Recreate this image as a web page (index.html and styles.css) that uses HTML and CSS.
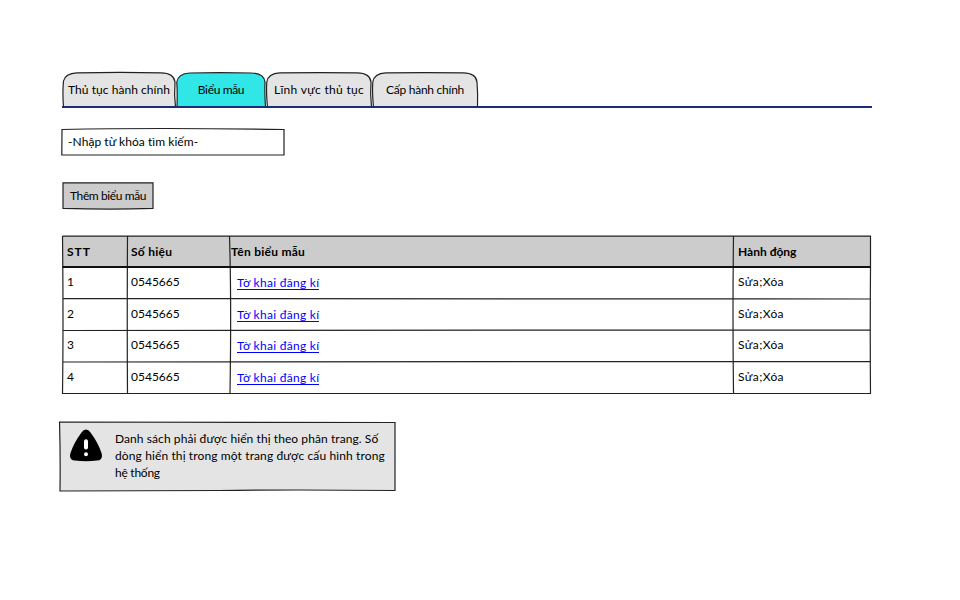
FILE: index.html
```html
<!DOCTYPE html>
<html lang="vi">
<head>
<meta charset="utf-8">
<title>Biểu mẫu</title>
<link rel="stylesheet" href="styles.css">
</head>
<body>
<main class="page">
  <nav class="tabs">
    <a class="tab tab-first"><svg class="frame" viewBox="0 0 114 36"><path d="M1.5 35C.5 22 1 14 1.5 9Q3 1.500 15 .8Q60 0 99 .8Q112 1 113 10Q112 23 113.500 35Z"/></svg><span class="t1">Thủ tục hành chính</span></a>
    <a class="tab tab-forms active"><svg class="frame" viewBox="0 0 91 36"><path d="M1 35Q1.500 20 .8 10Q2 1.500 14 .8Q43 0 76 .8Q89 1 90 10Q89.500 22 90.500 35Z"/></svg><span class="t2">Biểu mẫu</span></a>
    <a class="tab tab-fields"><svg class="frame" viewBox="0 0 107 36"><path d="M1.500 35Q0 20 .8 10Q2 1.500 14 .8Q55 0 92 .8Q105 1 106 10Q105 22 106.500 35Z"/></svg><span class="t3">Lĩnh vực thủ tục</span></a>
    <a class="tab tab-levels"><svg class="frame" viewBox="0 0 107 36"><path d="M1.500 35Q0 20 .8 10Q2 1.500 14 .8Q55 0 92 .8Q105 1 106 10Q107 22 106.500 35Z"/></svg><span class="t4">Cấp hành chính</span></a>
  </nav>
  <div class="search"><svg class="frame" viewBox="0 0 224 28"><path d="M1 1.500Q95 -.5 223 1.500L223 27L.8 27Z"/></svg><span class="t5">-Nhập từ khóa tìm kiếm-</span></div>
  <div class="button"><svg class="frame" viewBox="0 0 92 28"><path d="M1 .8H91V26.300Q50 27.800 1 26.300Z"/></svg><span class="t6">Thêm biểu mẫu</span></div>
  <section class="grid">
    <svg class="frame" viewBox="0 0 810 160"><path class="shade" d="M.5 1H808.500V32.500H.5Z"/><path class="lines" d="M.5 1L808.500 1.200L808.500 32Q808 100 808.500 158.500H.5Q1.500 90 .5 1M.5 63.500L808.500 64M.5 95.500L808.500 95M.5 127L808.500 126.500M65.500 1Q65 90 65.500 158.500M167.500 1Q169.500 65 168 158.500M671.500 1Q670.500 80 671.500 158.500"/><path class="heavy" d="M.5 32H808.500"/></svg>
    <div class="row head"><span class="b1">STT</span><span class="b2">Số hiệu</span><span class="name b3">Tên biểu mẫu</span><span class="b4">Hành động</span></div>
    <div class="row"><span>1</span><span class="code">0545665</span><a class="link">Tờ khai đăng kí</a><span class="act">Sửa;Xóa</span></div>
    <div class="row"><span>2</span><span class="code">0545665</span><a class="link">Tờ khai đăng kí</a><span class="act">Sửa;Xóa</span></div>
    <div class="row"><span>3</span><span class="code">0545665</span><a class="link">Tờ khai đăng kí</a><span class="act">Sửa;Xóa</span></div>
    <div class="row"><span>4</span><span class="code">0545665</span><a class="link">Tờ khai đăng kí</a><span class="act">Sửa;Xóa</span></div>
  </section>
  <aside class="note">
    <svg class="frame" viewBox="0 0 338 72"><path d="M.5 1L336 1.500V69.500Q230 68.500 160 69.500Q80 69.500 1 70Q1.500 35 .5 1Z"/></svg>
    <svg class="warn" viewBox="0 0 34 34"><path d="M17 .5Q19.500 .5 21.500 3.500Q29 13.500 32.500 24Q34.500 31 28 31.500Q17 33 6 31.500Q-.5 31 1.500 24Q5 13.500 12.500 3.500Q14.500 .5 17 .5Z"/><path class="mark" d="M17 12.300V18.500M17 25.200V25.300"/></svg>
    <p><span class="n1">Danh sách phải được hiển thị theo phân trang. Số</span><br><span class="n2">dòng hiển thị trong một trang được cấu hình trong</span><br><span class="n3">hệ thống</span></p>
  </aside>
</main>
</body>
</html>
```
FILE: styles.css
```css
body { margin: 0; background: #fff; color: #000; font: 12px/16px Lato, "Open Sans", sans-serif; font-variant-ligatures: none; }
.page { padding: 71px 88px 0 62px; }
.frame { position: absolute; inset: 0; width: 100%; height: 100%; z-index: -1; fill: #e4e4e4; stroke: #222; stroke-width: 1.2; overflow: visible; }
.tabs { display: flex; height: 35px; border-bottom: 2px solid #1c2c78; }
.tab { position: relative; display: flex; justify-content: center; box-sizing: border-box; height: 36px; padding-top: 11px; white-space: nowrap; }
.tab .frame { top: 1px; }
.tab-first { width: 114px; }
.tab-forms { width: 90px; }
.tab-fields { width: 106px; }
.tab-levels { width: 106px; }
.active .frame { fill: #30e6e6; }
.t1 { letter-spacing: .05px; }
.t2 { letter-spacing: -.35px; }
.t3 { letter-spacing: .3px; }
.t4 { letter-spacing: -.25px; }
.t5 { letter-spacing: .05px; }
.t6 { letter-spacing: -.4px; }
.search { position: relative; box-sizing: border-box; width: 224px; height: 28px; margin: 20px 0 0 -1px; padding: 6px 7px; }
.search .frame { fill: #fff; }
.button { position: relative; box-sizing: border-box; width: 92px; height: 28px; margin-top: 26px; padding: 6px 8px; white-space: nowrap; }
.button .frame { fill: #ccc; }
.grid { position: relative; width: 810px; height: 160px; margin-top: 25px; }
.shade { fill: #ccc; stroke: none; }
.lines { fill: none; stroke: #222; stroke-width: 1.2; }
.heavy { fill: none; stroke: #111; stroke-width: 1.8; }
.row { display: grid; grid-template-columns: 65px 103px 503px 137px; box-sizing: border-box; height: 31.5px; padding-top: 7px; }
.row > * { padding-left: 5px; justify-self: start; white-space: nowrap; }
.row .code { padding-left: 4px; }
.row .link { margin: 1px 0 0 7px; padding: 0; height: 14px; line-height: 16px; letter-spacing: .28px; color: #00f; border-bottom: 1px solid #00f; }
.row .act { letter-spacing: .4px; }
.head { height: 32px; padding-top: 9px; font-weight: 700; }
.row .name { padding-left: 1px; }
.row .b2 { padding-left: 4px; }
.b1 { letter-spacing: 1px; }
.b2, .b3 { letter-spacing: .27px; }
.note { position: relative; display: flex; box-sizing: border-box; width: 338px; height: 72px; margin: 26px 0 0 -3px; padding: 8px 0 0 10px; }
.warn { width: 34px; height: 34px; }
.mark { fill: none; stroke: #fff; stroke-width: 4; stroke-linecap: round; }
.note p { margin: 1px 0 0 12px; line-height: 17px; white-space: nowrap; }
.n1 { letter-spacing: .08px; }
.n2 { letter-spacing: .12px; }
.n3 { letter-spacing: -.25px; }
```
